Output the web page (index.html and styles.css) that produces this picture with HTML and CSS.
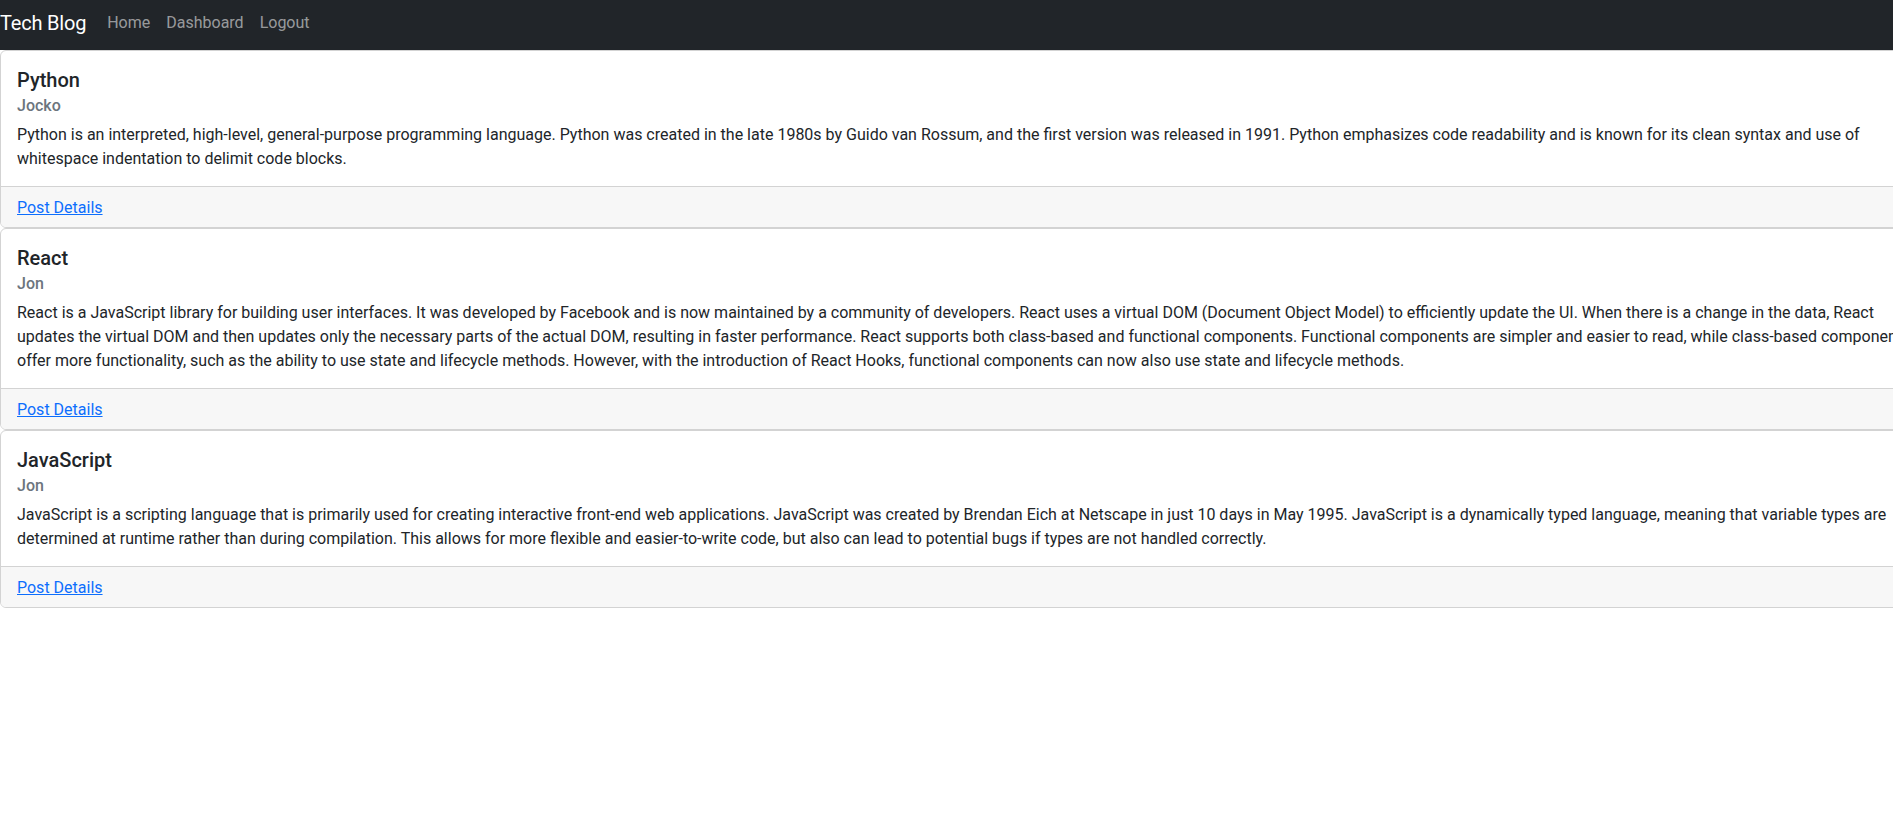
FILE: index.html
```html
<!DOCTYPE html>
<html lang="en">
<head>
<meta charset="utf-8">
<title>Tech Blog</title>
<link rel="stylesheet" href="styles.css">
</head>
<body>
<nav class="navbar">
  <a class="brand" href="#">Tech Blog</a>
  <ul class="nav">
    <li><a class="nav-link" href="#">Home</a></li>
    <li><a class="nav-link" href="#">Dashboard</a></li>
    <li><a class="nav-link" href="#">Logout</a></li>
  </ul>
</nav>
<main class="posts">
  <article class="card">
    <div class="card-body">
      <h5 class="card-title">Python</h5>
      <h6 class="card-subtitle">Jocko</h6>
      <p class="card-text">Python is an interpreted, high-level, general-purpose programming language. Python was created in the late 1980s by Guido van Rossum, and the first version was released in 1991. Python emphasizes code readability and is known for its clean syntax and use of whitespace indentation to delimit code blocks.</p>
    </div>
    <div class="card-footer"><a href="#">Post Details</a></div>
  </article>
  <article class="card">
    <div class="card-body">
      <h5 class="card-title">React</h5>
      <h6 class="card-subtitle">Jon</h6>
      <p class="card-text">React is a JavaScript library for building user interfaces. It was developed by Facebook and is now maintained by a community of developers. React uses a virtual DOM (Document Object Model) to efficiently update the UI. When there is a change in the data, React updates the virtual DOM and then updates only the necessary parts of the actual DOM, resulting in faster performance. React supports both class-based and functional components. Functional components are simpler and easier to read, while class-based components offer more functionality, such as the ability to use state and lifecycle methods. However, with the introduction of React Hooks, functional components can now also use state and lifecycle methods.</p>
    </div>
    <div class="card-footer"><a href="#">Post Details</a></div>
  </article>
  <article class="card">
    <div class="card-body">
      <h5 class="card-title">JavaScript</h5>
      <h6 class="card-subtitle">Jon</h6>
      <p class="card-text">JavaScript is a scripting language that is primarily used for creating interactive front-end web applications. JavaScript was created by Brendan Eich at Netscape in just 10 days in May 1995. JavaScript is a dynamically typed language, meaning that variable types are determined at runtime rather than during compilation. This allows for more flexible and easier-to-write code, but also can lead to potential bugs if types are not handled correctly.</p>
    </div>
    <div class="card-footer"><a href="#">Post Details</a></div>
  </article>
</main>
</body>
</html>
```
FILE: styles.css
```css
html { overflow-x: hidden; }
body {
  margin: 0;
  font-family: Roboto, "Liberation Sans", sans-serif;
  font-size: 16px;
  line-height: 24px;
  color: #212529;
  background: #fff;
}
.navbar {
  display: flex;
  align-items: center;
  height: 50px;
  box-sizing: border-box;
  padding-bottom: 5px;
  background: #212529;
}
.brand {
  font-size: 20px;
  line-height: 30px;
  color: #fff;
  text-decoration: none;
  margin-right: 13px;
  letter-spacing: -0.2px;
}
.nav {
  display: flex;
  list-style: none;
  margin: 0;
  padding: 0;
}
.nav-link {
  display: block;
  padding: 8px;
  color: rgba(255, 255, 255, 0.55);
  text-decoration: none;
}
.posts {
  display: flex;
  flex-direction: column;
}
.card {
  width: 1942px;
  border: 1px solid #d3d3d3;
  border-radius: 6px;
  background: #fff;
  overflow: hidden;
}
.card-body {
  padding: 17px 16px 15px;
}
.card-title {
  margin: 0 0 8px;
  font-size: 20px;
  line-height: 24px;
  font-weight: 500;
  color: #212529;
}
.card-subtitle {
  margin: -4px 0 8px;
  font-size: 16px;
  line-height: 19px;
  font-weight: 500;
  color: #6c757d;
}
.card-text {
  margin: 0;
}
.card-footer {
  padding: 9px 16px 7px;
  background: #f7f7f7;
  border-top: 1px solid #d3d3d3;
}
.card-footer a {
  color: #0d6efd;
  text-decoration: underline;
}
```
